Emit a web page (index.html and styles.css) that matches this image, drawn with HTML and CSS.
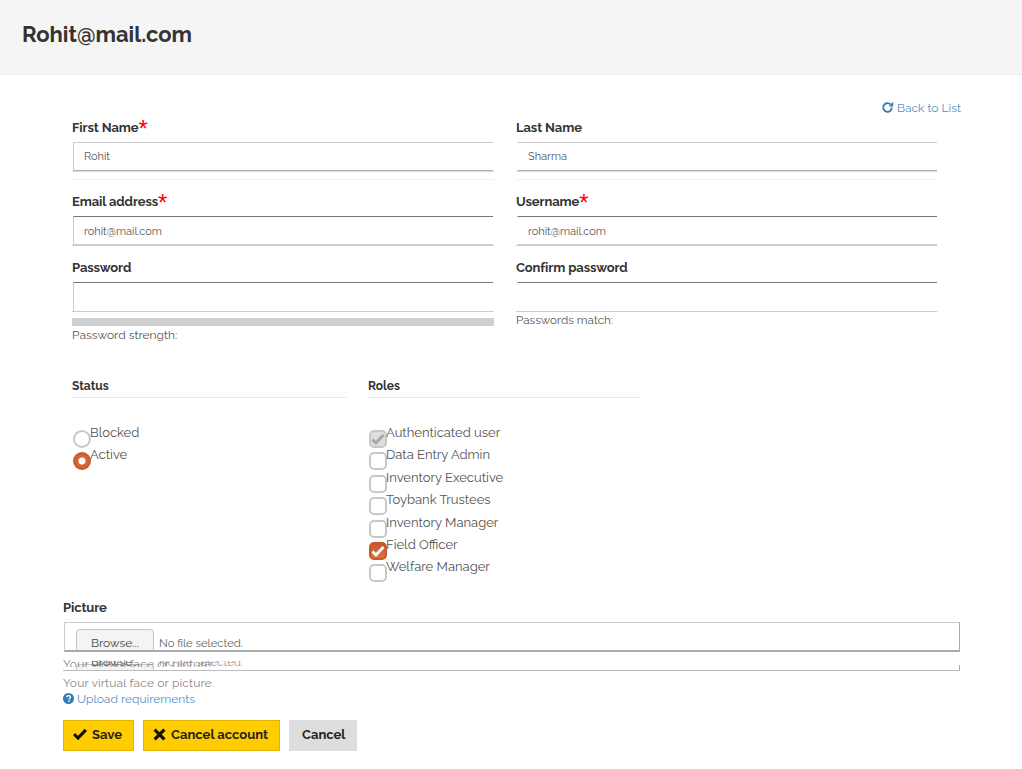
FILE: index.html
```html
<!DOCTYPE html>
<html lang="en">
<head>
    <meta charset="UTF-8">
    <meta name="viewport" content="width=device-width, initial-scale=1.0">
    <title>Rohit@mail.com</title>
    <link rel="stylesheet" href="styles.css">
</head>
<body>
    <header class="page-header">
        <h1>Rohit@mail.com</h1>
    </header>

    <main class="content">
        <div class="back-row">
            <a class="back-link" href="#">
                <svg class="icon-refresh" viewBox="0 0 24 24" width="13" height="13" aria-hidden="true">
                    <path d="M20 12a8 8 0 1 1-2.400-5.700" fill="none" stroke="#337ab7" stroke-width="3.400"/>
                    <path d="M22.500 1.500v8.500h-8.500z" fill="#337ab7"/>
                </svg>
                Back to List
            </a>
        </div>

        <form class="user-form">
            <div class="field-grid">
                <div class="field field-name">
                    <label>First Name<span class="req">*</span></label>
                    <div class="input-wrap">
                        <input class="text-input light-top" type="text" value="Rohit">
                    </div>
                    <hr class="row-rule">
                </div>
                <div class="field field-name">
                    <label>Last Name</label>
                    <div class="input-wrap">
                        <input class="text-input light-top no-left" type="text" value="Sharma">
                    </div>
                    <hr class="row-rule">
                </div>
                <div class="field field-mail">
                    <label>Email address<span class="req">*</span></label>
                    <div class="input-wrap">
                        <input class="text-input" type="text" value="rohit@mail.com">
                    </div>
                </div>
                <div class="field field-mail">
                    <label>Username<span class="req">*</span></label>
                    <div class="input-wrap">
                        <input class="text-input no-left" type="text" value="rohit@mail.com">
                    </div>
                </div>
                <div class="field field-pass">
                    <label>Password</label>
                    <div class="input-wrap">
                        <input class="text-input no-bottom" type="password">
                    </div>
                    <div class="strength-bar"></div>
                    <div class="hint">Password strength:</div>
                </div>
                <div class="field field-pass">
                    <label>Confirm password</label>
                    <div class="input-wrap">
                        <input class="text-input no-bottom no-left" type="password">
                    </div>
                    <div class="hint hint-match">Passwords match:</div>
                </div>
            </div>

            <div class="choice-row">
                <fieldset class="choice-group">
                    <h2>Status</h2>
                    <div class="choice"><span class="radio"></span>Blocked</div>
                    <div class="choice"><span class="radio on"></span>Active</div>
                </fieldset>
                <fieldset class="choice-group">
                    <h2>Roles</h2>
                    <div class="choice">
                        <span class="check locked">
                            <svg viewBox="0 0 16 16" width="16" height="16"><path d="M2.500 8.500l3.500 3.500 7.500-8" fill="none" stroke="#a6a6a6" stroke-width="2.800"/></svg>
                        </span>Authenticated user
                    </div>
                    <div class="choice"><span class="check"></span>Data Entry Admin</div>
                    <div class="choice"><span class="check"></span>Inventory Executive</div>
                    <div class="choice"><span class="check"></span>Toybank Trustees</div>
                    <div class="choice"><span class="check"></span>Inventory Manager</div>
                    <div class="choice">
                        <span class="check on">
                            <svg viewBox="0 0 16 16" width="16" height="16"><path d="M2.500 8.500l3.500 3.500 7.500-8" fill="none" stroke="#fff" stroke-width="2.800"/></svg>
                        </span>Field Officer
                    </div>
                    <div class="choice"><span class="check"></span>Welfare Manager</div>
                </fieldset>
            </div>

            <div class="picture">
                <label>Picture</label>
                <div class="file-box">
                    <span class="browse">Browse...</span>
                    <span class="file-name">No file selected.</span>
                </div>
                <div class="file-ghost">
                    <div class="ghost-inner">
                        <span class="browse"><span class="ghost-label">Browse...</span></span>
                        <span class="file-name">No file selected.</span>
                    </div>
                    <div class="ghost-caption">Your virtual face or picture.</div>
                </div>
                <div class="caption">Your virtual face or picture.</div>
                <a class="upload-link" href="#">
                    <svg viewBox="0 0 16 16" width="11" height="11" aria-hidden="true">
                        <circle cx="8" cy="8" r="8" fill="#337ab7"/>
                        <path d="M5.400 6.200c0-3.300 5.400-3.300 5.400-.2 0 1.900-2.100 1.900-2.100 3.500" fill="none" stroke="#fff" stroke-width="2"/>
                        <rect x="7.500" y="10.800" width="2.200" height="2.200" fill="#fff"/>
                    </svg>
                    Upload requirements
                </a>
            </div>

            <div class="actions">
                <button type="button" class="btn btn-yellow btn-save">
                    <svg viewBox="0 0 16 16" width="14" height="14" aria-hidden="true"><path d="M1.200 8.200l4.500 4.500 9-9.500" fill="none" stroke="#111" stroke-width="3.600"/></svg>
                    Save
                </button>
                <button type="button" class="btn btn-yellow btn-drop">
                    <svg viewBox="0 0 16 16" width="13" height="13" aria-hidden="true"><path d="M2 2l12 12M14 2L2 14" fill="none" stroke="#111" stroke-width="4"/></svg>
                    Cancel account
                </button>
                <button type="button" class="btn btn-grey">Cancel</button>
            </div>
        </form>
    </main>
</body>
</html>
```

FILE: styles.css
```css
* {
    box-sizing: border-box;
}

body {
    font-family: "Raleway", "Montserrat", "Lato", "Liberation Sans", sans-serif;
    font-size: 13px;
    color: #333;
    margin: 0;
    padding: 0;
    background-color: #fff;
}

.page-header {
    height: 75px;
    background-color: #f5f5f5;
    border-bottom: 1px solid #eee;
    padding: 22px 22px 0;
}

.page-header h1 {
    margin: 0;
    font-size: 22px;
    line-height: 24px;
    font-weight: 700;
    color: #333;
}

.content {
    padding: 0 61px 0 63px;
}

.back-row {
    display: flex;
    justify-content: flex-end;
    height: 24px;
    padding-top: 25px;
}

.back-link {
    color: #5a8fc4;
    text-decoration: none;
    font-size: 12px;
    line-height: 16px;
    height: 16px;
    white-space: nowrap;
}

.icon-refresh {
    vertical-align: -2px;
}

.field-grid {
    display: grid;
    grid-template-columns: 422px 421px;
    column-gap: 22px;
    margin-left: 9px;
    margin-top: 19px;
}

.field label,
.picture label {
    display: block;
    padding-top: 1px;
    height: 17px;
    font-weight: 700;
    font-size: 13px;
    line-height: 16px;
    letter-spacing: -0.1px;
    color: #333;
    white-space: nowrap;
}

.req {
    color: #f00;
    font-family: "Liberation Sans", sans-serif;
    font-weight: 400;
    font-size: 24px;
    line-height: 0;
    vertical-align: -5px;
}

.field-name {
    height: 74px;
}

.field-mail {
    height: 66px;
}

.field-pass {
    height: 96px;
}

.input-wrap {
    margin-top: 6px;
    padding: 0 1px;
    border-bottom: 1px solid #ccc;
}

.field-name .input-wrap {
    border-bottom-color: #ddd;
}

.field:nth-child(even) .input-wrap {
    padding-right: 0;
}

.row-rule {
    margin: 7px 0 0;
    border: 0;
    border-top: 1px solid #f2f2f2;
}

.text-input {
    display: block;
    width: 100%;
    height: 29px;
    padding: 0 10px;
    margin: 0;
    font: inherit;
    font-size: 11px;
    color: #555;
    background: #fff;
    outline: none;
    border-style: solid;
    border-width: 1px 0 1px 1px;
    border-color: #767676 #fff #ccc #ccc;
    border-radius: 0;
}

.field-mail .text-input {
    padding-top: 1px;
}

.light-top {
    border-top-color: #ccc;
    border-bottom-color: #b0b0b0;
}

.no-left {
    border-left-color: #fff;
}

.no-bottom {
    border-bottom-width: 0;
}

.strength-bar {
    height: 8px;
    margin-top: 6px;
    background-color: #d0d0d0;
}

.hint {
    margin-top: 2px;
    font-size: 12px;
    line-height: 14px;
    color: #555;
}

.hint-match {
    margin-top: 1px;
    font-size: 11.700px;
}

.choice-row {
    display: flex;
    gap: 22px;
    margin-left: 9px;
    margin-top: 22px;
}

.choice-group {
    width: 274px;
    margin: 0;
    padding: 0;
    border: 0;
}

.choice-group + .choice-group {
    width: 273px;
}

.choice-group h2 {
    margin: 0 0 26px;
    padding: 1px 0 3px;
    font-size: 12px;
    line-height: 16px;
    font-weight: 700;
    color: #333;
    border-bottom: 1px solid #e8e8e8;
}

.choice {
    display: flex;
    align-items: flex-start;
    height: 22.400px;
    font-size: 13px;
    line-height: 18px;
    color: #555;
    white-space: nowrap;
}

.radio,
.check {
    flex: none;
    width: 18px;
    height: 18px;
    margin: 6px -1px 0 1px;
    border: 2px solid #c8c8c8;
    background: #fff;
}

.radio {
    border-radius: 50%;
}

.radio.on {
    border: 0;
    background: radial-gradient(circle, #fff 0 3px, #d9683c 4px, #c9572b 9px);
}

.check {
    border-radius: 5px;
}

.check svg {
    display: block;
    margin: -1px;
}

.check.locked {
    background-color: #ddd;
}

.check.on {
    background: linear-gradient(#c9572b, #dc7348);
    border-color: #c9572b;
}

.picture {
    position: relative;
    margin-top: 18px;
}

.file-box {
    height: 30px;
    border: 1px solid #ccc;
    border-right-color: #aaa;
    border-bottom: 2px solid #aaa;
    padding: 6px 11px 0;
    margin: 6px 1px 0 1px;
    overflow: hidden;
    display: flex;
    align-items: flex-start;
    gap: 5px;
}

.browse {
    flex: none;
    width: 78px;
    height: 30px;
    text-align: center;
    font-size: 12px;
    line-height: 26px;
    color: #444;
    border: 1px solid #c4c4c4;
    border-radius: 4px;
    background: #f4f4f4;
}

.file-name {
    font-size: 11.300px;
    line-height: 28px;
    color: #666;
    white-space: nowrap;
}

/* the reference shows a second, clipped copy of the file box under the first */
.file-ghost {
    position: relative;
    height: 19px;
    margin-right: 1px;
    border-bottom: 1px solid #bbb;
}

.file-ghost::after {
    content: "";
    position: absolute;
    right: 0;
    bottom: 0;
    width: 1px;
    height: 5px;
    background-color: #aaa;
}

.ghost-inner {
    position: absolute;
    left: 13px;
    top: 9px;
    display: flex;
    gap: 5px;
    height: 9px;
    overflow: hidden;
}

.ghost-inner .browse {
    margin-top: 3px;
    line-height: 0;
}

.ghost-label {
    position: relative;
    top: -3px;
}

.ghost-inner .file-name {
    margin-top: -6px;
    line-height: 14px;
    color: #999;
}

.ghost-caption {
    position: absolute;
    left: 0;
    top: 5px;
    height: 10px;
    overflow: hidden;
    font-size: 12px;
    line-height: 14px;
    letter-spacing: 0.15px;
    color: #888;
}

.caption {
    margin-top: 5px;
    font-size: 12px;
    line-height: 14px;
    letter-spacing: 0.15px;
    color: #888;
}

.upload-link {
    display: block;
    margin-top: 2px;
    font-size: 12px;
    line-height: 14px;
    color: #5a8fc4;
    text-decoration: none;
}

.upload-link svg {
    vertical-align: -1px;
}

.actions {
    display: flex;
    gap: 9px;
    margin-top: 14px;
}

.btn {
    height: 31px;
    padding: 0 11px 2px 9px;
    font: inherit;
    font-size: 13px;
    font-weight: 700;
    color: #222;
    border: 1px solid transparent;
    cursor: pointer;
    white-space: nowrap;
}

.btn svg {
    vertical-align: -2px;
    margin-right: 2px;
}

.btn-yellow {
    background-color: #fc0;
    border-color: #e0b400;
}

.btn-grey {
    background-color: #ddd;
    border-color: #ddd;
    padding: 0 11px 2px 12px;
}
```
